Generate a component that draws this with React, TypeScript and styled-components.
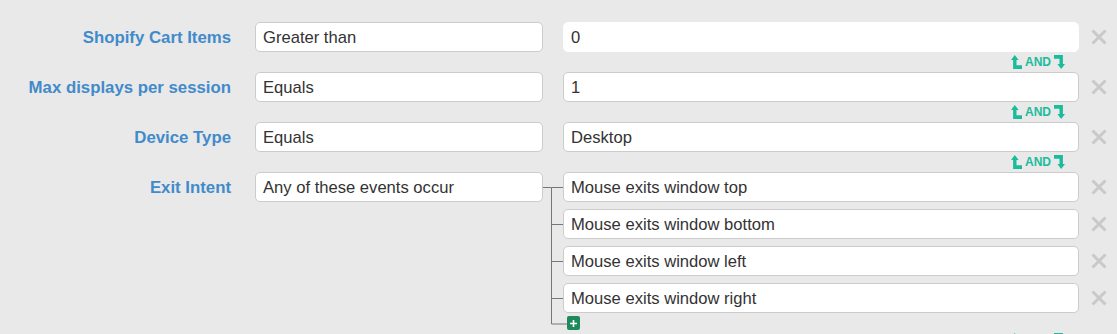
import React from "react";
import styled, { createGlobalStyle } from "styled-components";

const Global = createGlobalStyle`
  html, body { margin: 0; padding: 0; background: #e9e9e9; }
  body { font-family: "Liberation Sans", Arial, sans-serif; }
`;

const Page = styled.div`
  width: 1117px;
  height: 334px;
  overflow: hidden;
  padding-top: 22px;
  box-sizing: border-box;
  background: #e9e9e9;
`;

const Condition = styled.div`
  display: flex;
  align-items: flex-start;
`;

const Label = styled.div`
  width: 231px;
  margin-right: 24px;
  height: 31px;
  line-height: 31px;
  text-align: right;
  font-weight: bold;
  font-size: 16.8px;
  color: #428bca;
  white-space: nowrap;
`;

const Box = styled.div<{ $focused?: boolean }>`
  box-sizing: border-box;
  height: 30px;
  line-height: 29px;
  padding: 0 7px;
  border: 1px solid ${(p) => (p.$focused ? "#ffffff" : "#cccccc")};
  border-radius: 5px;
  background: #fff;
  font-size: 16.6px;
  color: #333;
  white-space: nowrap;
`;

const Operator = styled(Box)`
  width: 288px;
  flex: none;
`;

const Gap = styled.div`
  width: 20px;
  flex: none;
  position: relative;
`;

const ValueColumn = styled.div`
  display: flex;
  flex-direction: column;
  gap: 7px;
`;

const ValueRow = styled.div`
  display: flex;
  align-items: center;
`;

const Value = styled(Box)`
  width: 516px;
`;

const Remove = styled.button`
  width: 38px;
  height: 30px;
  padding: 0 0 0 1px;
  border: none;
  background: transparent;
  display: flex;
  align-items: center;
  justify-content: center;
  cursor: pointer;
`;

const AndLine = styled.div`
  display: flex;
  justify-content: flex-end;
  align-items: center;
  height: 20px;
  width: 516px;
  padding-right: 14px;
  box-sizing: border-box;
`;

const AndBadge = styled.div`
  display: flex;
  align-items: center;
  gap: 3px;
  font-size: 12px;
  font-weight: bold;
  color: #1abc9c;
`;

const ValueBlock = styled.div`
  display: flex;
  flex-direction: column;
`;

const PlusButton = styled.button`
  margin: 3px 0 0 4px;
  width: 13px;
  height: 14px;
  padding: 0;
  border: none;
  border-radius: 2px;
  background: #1e8a5c;
  display: flex;
  align-items: center;
  justify-content: center;
`;

const TreeSvg = styled.svg`
  position: absolute;
  left: 0;
  top: 0;
  overflow: visible;
`;

const XIcon = () => (
  <svg width="16" height="16" viewBox="0 0 16 16">
    <path d="M1.5 1.5 L14.5 14.5 M14.5 1.5 L1.5 14.5" stroke="#c9c9c9" strokeWidth="3" strokeLinecap="butt" />
  </svg>
);

const UpIcon = () => (
  <svg width="11" height="14" viewBox="0 0 11 14">
    <path d="M0 5 L3.8 0 L7.6 5 L5.5 5 L5.5 10.3 L11 10.3 L11 14 L2.1 14 L2.1 5 Z" fill="#1abc9c" />
  </svg>
);

const DownIcon = () => (
  <svg width="11" height="14" viewBox="0 0 11 14">
    <path d="M0 0 L8.9 0 L8.9 9 L11 9 L7.2 14 L3.4 9 L5.5 9 L5.5 3.7 L0 3.7 Z" fill="#1abc9c" />
  </svg>
);

const And = () => (
  <AndLine>
    <AndBadge>
      <UpIcon />
      <span>AND</span>
      <DownIcon />
    </AndBadge>
  </AndLine>
);

type Cond = { label: string; op: string; values: string[]; focused?: boolean };

const conditions: Cond[] = [
  { label: "Shopify Cart Items", op: "Greater than", values: ["0"], focused: true },
  { label: "Max displays per session", op: "Equals", values: ["1"] },
  { label: "Device Type", op: "Equals", values: ["Desktop"] },
  {
    label: "Exit Intent",
    op: "Any of these events occur",
    values: [
      "Mouse exits window top",
      "Mouse exits window bottom",
      "Mouse exits window left",
      "Mouse exits window right",
    ],
  },
];

const Tree = ({ count }: { count: number }) => {
  const step = 37;
  const first = 15.5;
  const last = first + (count - 1) * step;
  const plusY = last + 15 + 3 + 7.5;
  const x = 8.5;
  let d = `M0 ${first} H${x} M${x} ${first} V${plusY} H24`;
  for (let i = 0; i < count; i++) {
    d += ` M${x} ${first + i * step} H20`;
  }
  return (
    <TreeSvg width="20" height={plusY + 2}>
      <path d={d} stroke="#777" strokeWidth="1" fill="none" />
    </TreeSvg>
  );
};

export default function App() {
  return (
    <>
      <Global />
      <Page>
        {conditions.map((c) => {
          const multi = c.values.length > 1;
          return (
            <Condition key={c.label}>
              <Label>{c.label}</Label>
              <Operator>{c.op}</Operator>
              <Gap>{multi && <Tree count={c.values.length} />}</Gap>
              <ValueBlock>
                <ValueColumn>
                  {c.values.map((v) => (
                    <ValueRow key={v}>
                      <Value $focused={c.focused}>{v}</Value>
                      <Remove aria-label="remove">
                        <XIcon />
                      </Remove>
                    </ValueRow>
                  ))}
                </ValueColumn>
                {multi && (
                  <PlusButton aria-label="add">
                    <svg width="7" height="7" viewBox="0 0 7 7">
                      <path d="M3.5 0 V7 M0 3.5 H7" stroke="#fff" strokeWidth="1.6" />
                    </svg>
                  </PlusButton>
                )}
                <And />
              </ValueBlock>
            </Condition>
          );
        })}
      </Page>
    </>
  );
}
